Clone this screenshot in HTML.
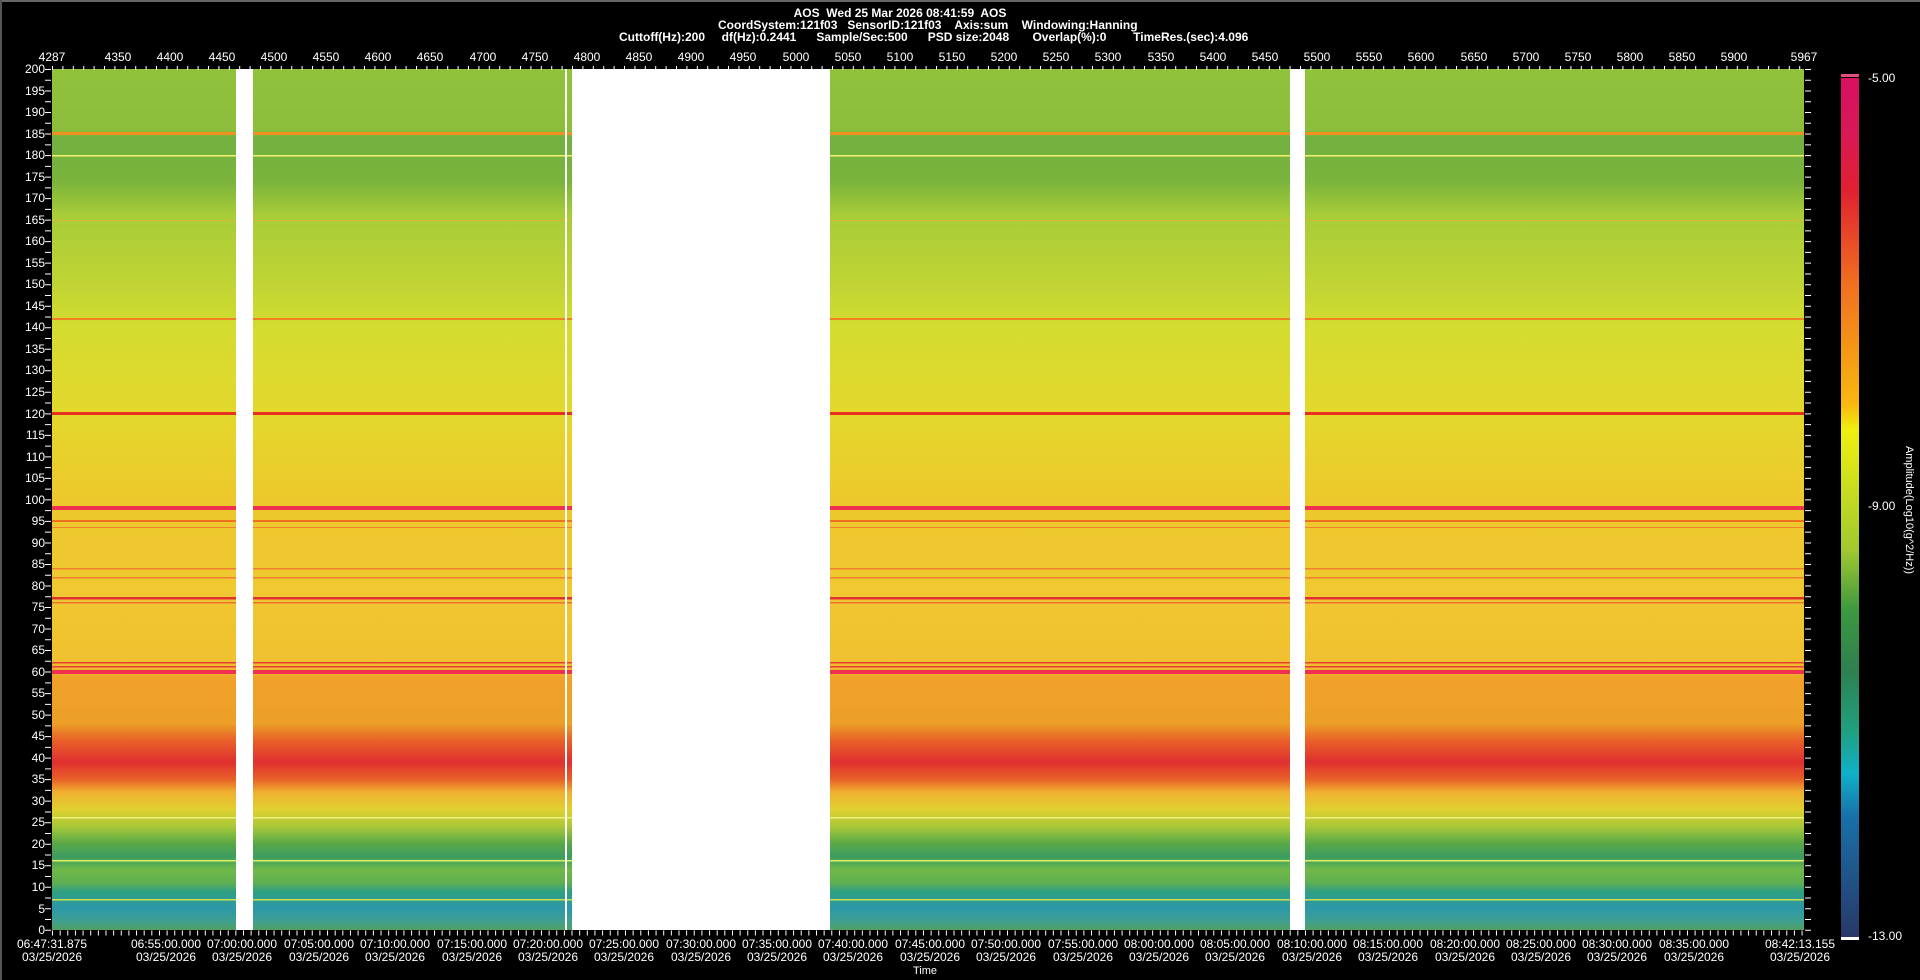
<!DOCTYPE html>
<html><head><meta charset="utf-8"><style>
html,body{margin:0;padding:0;background:#000;width:1920px;height:980px;overflow:hidden}
svg{display:block}
text{font-family:"Liberation Sans Narrow","Liberation Sans",sans-serif;fill:#fff;white-space:pre}
</style></head><body>
<svg width="1920" height="980" viewBox="0 0 1920 980" xmlns="http://www.w3.org/2000/svg">
<defs>
<linearGradient id="sp" x1="0" y1="0" x2="0" y2="1">
<stop offset="0" stop-color="#90c23c"/><stop offset="0.07" stop-color="#8cbe3c"/>
<stop offset="0.08" stop-color="#72b040"/><stop offset="0.13" stop-color="#7ab43c"/>
<stop offset="0.17" stop-color="#a8cc38"/><stop offset="0.25" stop-color="#c0d434"/>
<stop offset="0.30" stop-color="#d4dc30"/><stop offset="0.40" stop-color="#e4d82c"/>
<stop offset="0.50" stop-color="#ecc82c"/><stop offset="0.60" stop-color="#f0c830"/>
<stop offset="0.69" stop-color="#f0c030"/><stop offset="0.71" stop-color="#f0a028"/>
<stop offset="0.76" stop-color="#eca028"/><stop offset="0.78" stop-color="#e86028"/>
<stop offset="0.805" stop-color="#e03030"/><stop offset="0.825" stop-color="#e86028"/>
<stop offset="0.84" stop-color="#f0b030"/><stop offset="0.86" stop-color="#e0d030"/>
<stop offset="0.88" stop-color="#a8c838"/><stop offset="0.90" stop-color="#58a848"/>
<stop offset="0.915" stop-color="#3c9c60"/><stop offset="0.93" stop-color="#70b848"/>
<stop offset="0.945" stop-color="#60b050"/><stop offset="0.955" stop-color="#30a080"/>
<stop offset="0.975" stop-color="#2c98a8"/><stop offset="0.99" stop-color="#40a090"/>
<stop offset="1" stop-color="#50a060"/>
</linearGradient>
<linearGradient id="cb" x1="0" y1="0" x2="0" y2="1">
<stop offset="0" stop-color="#d81060"/><stop offset="0.06" stop-color="#d81858"/>
<stop offset="0.13" stop-color="#e02030"/><stop offset="0.24" stop-color="#f07020"/>
<stop offset="0.38" stop-color="#f8b810"/><stop offset="0.41" stop-color="#f0f010"/>
<stop offset="0.55" stop-color="#a0c830"/><stop offset="0.62" stop-color="#3c9840"/>
<stop offset="0.69" stop-color="#2e8050"/><stop offset="0.76" stop-color="#20a080"/>
<stop offset="0.81" stop-color="#10b0c8"/><stop offset="0.86" stop-color="#1870a8"/>
<stop offset="1" stop-color="#283868"/>
</linearGradient>
</defs>
<rect x="0" y="0" width="1920" height="2" fill="#666"/>
<rect x="0" y="0" width="2" height="980" fill="#555"/>
<g font-weight="bold" font-size="12">
<text x="900" y="17" text-anchor="middle">AOS  Wed 25 Mar 2026 08:41:59  AOS</text>
<text x="718" y="29">CoordSystem:121f03   SensorID:121f03    Axis:sum    Windowing:Hanning</text>
<text x="619" y="41">Cuttoff(Hz):200     df(Hz):0.2441      Sample/Sec:500      PSD size:2048       Overlap(%):0        TimeRes.(sec):4.096</text>
</g>
<rect x="52" y="69" width="1752" height="861" fill="url(#sp)"/>
<g>
<rect x="52" y="132" width="1752" height="3" fill="#f09020"/>
<rect x="52" y="155" width="1752" height="1.5" fill="#f4f070"/>
<rect x="52" y="220" width="1752" height="1" fill="#e8b030" opacity="0.6"/>
<rect x="52" y="318" width="1752" height="2" fill="#f08020"/>
<rect x="52" y="412" width="1752" height="3" fill="#e83020"/>
<rect x="52" y="506" width="1752" height="4" fill="#f03050"/>
<rect x="52" y="520" width="1752" height="2" fill="#f07020"/>
<rect x="52" y="527" width="1752" height="1" fill="#f08030"/>
<rect x="52" y="568" width="1752" height="1.5" fill="#f08030"/>
<rect x="52" y="577" width="1752" height="1.5" fill="#f08030"/>
<rect x="52" y="597" width="1752" height="2.5" fill="#e03030"/>
<rect x="52" y="602" width="1752" height="1.5" fill="#f07030"/>
<rect x="52" y="662" width="1752" height="1.5" fill="#e84030"/>
<rect x="52" y="666" width="1752" height="1.5" fill="#e84030"/>
<rect x="52" y="670" width="1752" height="4" fill="#f03050"/>
<rect x="52" y="817" width="1752" height="1.5" fill="#f0f080"/>
<rect x="52" y="860" width="1752" height="1.5" fill="#e0f060"/>
<rect x="52" y="899" width="1752" height="1.5" fill="#d0e050"/>
</g>
<rect x="236" y="69" width="17" height="861" fill="#fff"/>
<rect x="565" y="69" width="2" height="861" fill="#fff"/>
<rect x="572" y="69" width="258" height="861" fill="#fff"/>
<rect x="1290" y="69" width="15" height="861" fill="#fff"/>
<line x1="52" y1="68" x2="1804" y2="68" stroke="#fff" stroke-dasharray="1 9.4" stroke-width="4"/>
<g font-size="12" text-anchor="middle">
<text x="52" y="61">4287</text><text x="118" y="61">4350</text><text x="170" y="61">4400</text><text x="222" y="61">4450</text><text x="274" y="61">4500</text><text x="326" y="61">4550</text><text x="378" y="61">4600</text><text x="430" y="61">4650</text><text x="483" y="61">4700</text><text x="535" y="61">4750</text><text x="587" y="61">4800</text><text x="639" y="61">4850</text><text x="691" y="61">4900</text><text x="743" y="61">4950</text><text x="796" y="61">5000</text><text x="848" y="61">5050</text><text x="900" y="61">5100</text><text x="952" y="61">5150</text><text x="1004" y="61">5200</text><text x="1056" y="61">5250</text><text x="1108" y="61">5300</text><text x="1161" y="61">5350</text><text x="1213" y="61">5400</text><text x="1265" y="61">5450</text><text x="1317" y="61">5500</text><text x="1369" y="61">5550</text><text x="1421" y="61">5600</text><text x="1474" y="61">5650</text><text x="1526" y="61">5700</text><text x="1578" y="61">5750</text><text x="1630" y="61">5800</text><text x="1682" y="61">5850</text><text x="1734" y="61">5900</text><text x="1804" y="61">5967</text>
</g>
<line x1="48" y1="69" x2="48" y2="931" stroke="#fff" stroke-width="6" stroke-dasharray="1 9.76"/>
<line x1="1808" y1="69" x2="1808" y2="931" stroke="#fff" stroke-width="6" stroke-dasharray="1 9.76"/>
<g font-size="12" text-anchor="end">
<text x="45" y="73">200</text><text x="45" y="95">195</text><text x="45" y="116">190</text><text x="45" y="138">185</text><text x="45" y="159">180</text><text x="45" y="181">175</text><text x="45" y="202">170</text><text x="45" y="224">165</text><text x="45" y="245">160</text><text x="45" y="267">155</text><text x="45" y="288">150</text><text x="45" y="310">145</text><text x="45" y="331">140</text><text x="45" y="353">135</text><text x="45" y="374">130</text><text x="45" y="396">125</text><text x="45" y="418">120</text><text x="45" y="439">115</text><text x="45" y="461">110</text><text x="45" y="482">105</text><text x="45" y="504">100</text><text x="45" y="525">95</text><text x="45" y="547">90</text><text x="45" y="568">85</text><text x="45" y="590">80</text><text x="45" y="611">75</text><text x="45" y="633">70</text><text x="45" y="654">65</text><text x="45" y="676">60</text><text x="45" y="697">55</text><text x="45" y="719">50</text><text x="45" y="740">45</text><text x="45" y="762">40</text><text x="45" y="783">35</text><text x="45" y="805">30</text><text x="45" y="826">25</text><text x="45" y="848">20</text><text x="45" y="869">15</text><text x="45" y="891">10</text><text x="45" y="913">5</text><text x="45" y="934">0</text>
</g>
<line x1="52" y1="933" x2="1804" y2="933" stroke="#fff" stroke-width="5" stroke-dasharray="1 6.64"/>
<g font-size="12" text-anchor="middle">
<text x="52" y="948">06:47:31.875</text><text x="52" y="961">03/25/2026</text>
<text x="166" y="948">06:55:00.000</text><text x="166" y="961">03/25/2026</text>
<text x="242" y="948">07:00:00.000</text><text x="242" y="961">03/25/2026</text>
<text x="319" y="948">07:05:00.000</text><text x="319" y="961">03/25/2026</text>
<text x="395" y="948">07:10:00.000</text><text x="395" y="961">03/25/2026</text>
<text x="472" y="948">07:15:00.000</text><text x="472" y="961">03/25/2026</text>
<text x="548" y="948">07:20:00.000</text><text x="548" y="961">03/25/2026</text>
<text x="624" y="948">07:25:00.000</text><text x="624" y="961">03/25/2026</text>
<text x="701" y="948">07:30:00.000</text><text x="701" y="961">03/25/2026</text>
<text x="777" y="948">07:35:00.000</text><text x="777" y="961">03/25/2026</text>
<text x="853" y="948">07:40:00.000</text><text x="853" y="961">03/25/2026</text>
<text x="930" y="948">07:45:00.000</text><text x="930" y="961">03/25/2026</text>
<text x="1006" y="948">07:50:00.000</text><text x="1006" y="961">03/25/2026</text>
<text x="1083" y="948">07:55:00.000</text><text x="1083" y="961">03/25/2026</text>
<text x="1159" y="948">08:00:00.000</text><text x="1159" y="961">03/25/2026</text>
<text x="1235" y="948">08:05:00.000</text><text x="1235" y="961">03/25/2026</text>
<text x="1312" y="948">08:10:00.000</text><text x="1312" y="961">03/25/2026</text>
<text x="1388" y="948">08:15:00.000</text><text x="1388" y="961">03/25/2026</text>
<text x="1465" y="948">08:20:00.000</text><text x="1465" y="961">03/25/2026</text>
<text x="1541" y="948">08:25:00.000</text><text x="1541" y="961">03/25/2026</text>
<text x="1617" y="948">08:30:00.000</text><text x="1617" y="961">03/25/2026</text>
<text x="1694" y="948">08:35:00.000</text><text x="1694" y="961">03/25/2026</text>
<text x="1800" y="948">08:42:13.155</text><text x="1800" y="961">03/25/2026</text>
<text x="925" y="974" font-size="11">Time</text>
</g>
<rect x="1841" y="74" width="18" height="3" fill="#e05080"/>
<rect x="1841" y="78" width="18" height="859" fill="url(#cb)"/>
<rect x="1841" y="937" width="18" height="3" fill="#fff"/>
<g font-size="12">
<text x="1868" y="82">-5.00</text>
<text x="1868" y="510">-9.00</text>
<text x="1868" y="940">-13.00</text>
</g>
<text font-size="11" text-anchor="middle" transform="translate(1906,510) rotate(90)">Amplitude(Log10(g^2/Hz))</text>
</svg>
</body></html>
